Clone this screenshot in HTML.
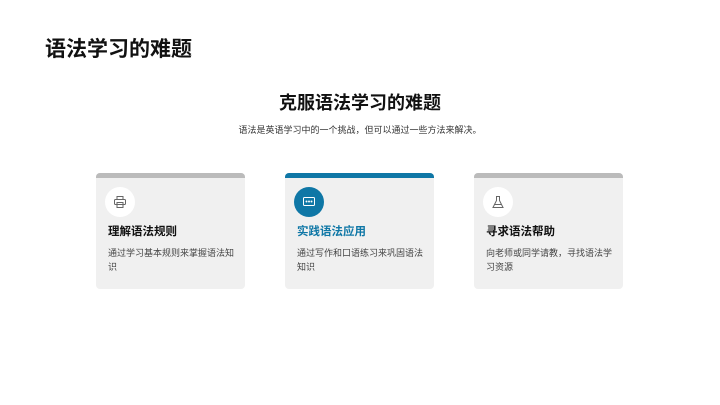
<!DOCTYPE html>
<html><head><meta charset="utf-8"><style>
*{margin:0;padding:0;box-sizing:border-box}
body{width:720px;height:405px;background:#fff;font-family:"Liberation Sans","Noto Sans CJK SC",sans-serif;position:relative;overflow:hidden;color:#111}
.h1{position:absolute;left:45px;top:33px;font-size:21px;font-weight:bold}
.h2{position:absolute;left:0;width:720px;top:89px;text-align:center;font-size:18px;font-weight:bold}
.sub{position:absolute;left:0;width:720px;top:123px;text-align:center;font-size:9px;color:#333}
.card{position:absolute;top:173px;width:149px;height:116px;background:#f0f0f0;border-radius:4px;overflow:hidden}
.bar{height:5px;background:#bbb}
.ic{position:absolute;left:9px;top:14px;width:30px;height:30px;border-radius:50%;background:#fff;display:flex;align-items:center;justify-content:center}
.t{position:absolute;left:12px;top:50px;font-size:11.5px;font-weight:bold}
.d{position:absolute;left:12px;top:73px;width:132px;font-size:9px;line-height:14px;color:#444}
</style></head><body>
<div class="h1">语法学习的难题</div>
<div class="h2">克服语法学习的难题</div>
<div class="sub">语法是英语学习中的一个挑战，但可以通过一些方法来解决。</div>

<div class="card" style="left:96px"><div class="bar"></div>
<div class="ic"><svg width="14" height="14" viewBox="0 0 14 14" fill="none" stroke="#666" stroke-width="1"><rect x="4" y="1.5" width="6" height="3"/><rect x="1.5" y="4.5" width="11" height="5" rx="1"/><rect x="4" y="7.5" width="6" height="5"/></svg></div>
<div class="t">理解语法规则</div><div class="d">通过学习基本规则来掌握语法知识</div></div>

<div class="card" style="left:285px"><div class="bar" style="background:#0f77a6"></div>
<div class="ic" style="background:#0f77a6"><svg width="14" height="14" viewBox="0 0 14 14" fill="none" stroke="#fff" stroke-width="1"><rect x="1.5" y="2.5" width="11" height="8" rx="1"/><circle cx="4.5" cy="6.5" r=".5"/><circle cx="7" cy="6.5" r=".5"/><circle cx="9.5" cy="6.5" r=".5"/></svg></div>
<div class="t" style="color:#0f77a6">实践语法应用</div><div class="d">通过写作和口语练习来巩固语法知识</div></div>

<div class="card" style="left:474px"><div class="bar"></div>
<div class="ic"><svg width="14" height="14" viewBox="0 0 14 14" fill="none" stroke="#666" stroke-width="1"><path d="M5 1.5h4M5.5 1.5v4L2 12.5h10L8.5 5.5v-4M3.5 9.5h7"/></svg></div>
<div class="t">寻求语法帮助</div><div class="d">向老师或同学请教，寻找语法学习资源</div></div>
</body></html>
